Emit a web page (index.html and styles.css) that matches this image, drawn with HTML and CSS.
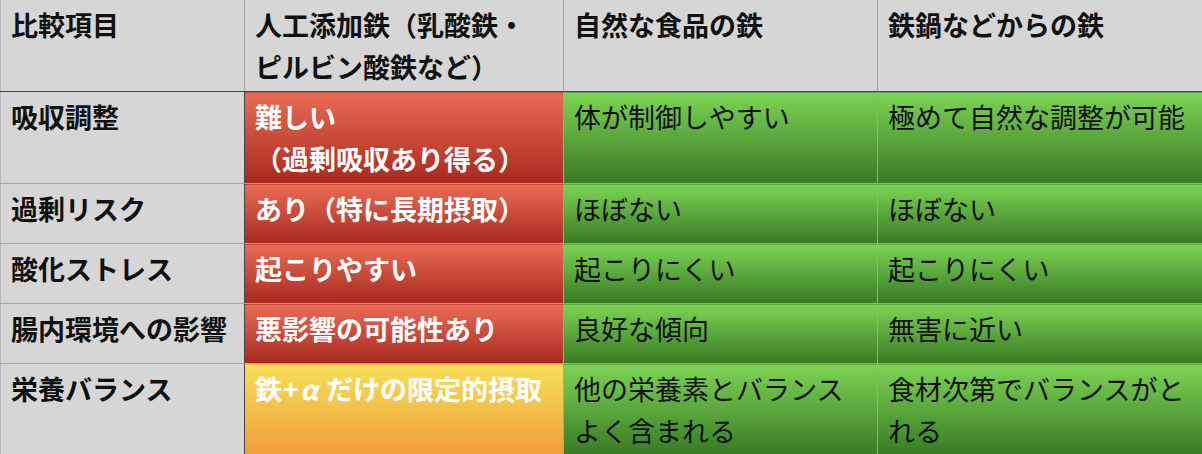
FILE: index.html
```html
<!DOCTYPE html>
<html lang="ja">
<head>
<meta charset="utf-8">
<title>鉄の比較</title>
<link rel="stylesheet" href="styles.css">
</head>
<body>
<table class="cmp">
  <colgroup>
    <col class="c1"><col class="c2"><col class="c3"><col class="c4">
  </colgroup>
  <thead>
    <tr class="head">
      <th>比較項目</th>
      <th>人工添加鉄（乳酸鉄・ピルビン酸鉄など）</th>
      <th>自然な食品の鉄</th>
      <th>鉄鍋などからの鉄</th>
    </tr>
  </thead>
  <tbody>
    <tr>
      <th class="item">吸収調整</th>
      <td class="bad">難しい<br>（過剰吸収あり得る）</td>
      <td class="good">体が制御しやすい</td>
      <td class="good">極めて自然な調整が可能</td>
    </tr>
    <tr class="one">
      <th class="item">過剰リスク</th>
      <td class="bad">あり（特に長期摂取）</td>
      <td class="good">ほぼない</td>
      <td class="good">ほぼない</td>
    </tr>
    <tr class="one">
      <th class="item">酸化ストレス</th>
      <td class="bad">起こりやすい</td>
      <td class="good">起こりにくい</td>
      <td class="good">起こりにくい</td>
    </tr>
    <tr class="one">
      <th class="item">腸内環境への影響</th>
      <td class="bad">悪影響の可能性あり</td>
      <td class="good">良好な傾向</td>
      <td class="good">無害に近い</td>
    </tr>
    <tr>
      <th class="item">栄養バランス</th>
      <td class="warn">鉄<span class="plus">+</span><span class="greek">α</span>だけの限定的摂取</td>
      <td class="good">他の栄養素とバランスよく含まれる</td>
      <td class="good">食材次第でバランスがとれる</td>
    </tr>
  </tbody>
</table>
</body>
</html>
```

FILE: styles.css
```css
html, body {
  margin: 0;
  padding: 0;
  background: #ffffff;
}

.cmp {
  width: 1202px;
  table-layout: fixed;
  border-collapse: collapse;
  font-family: "Noto Sans CJK JP", "Noto Sans", sans-serif;
  font-size: 27px;
  line-height: 42px;
  color: #111111;
}

.c1 { width: 244px; }
.c2 { width: 319px; }
.c3 { width: 314px; }
.c4 { width: 325px; }

.cmp th,
.cmp td {
  text-align: left;
  vertical-align: top;
  padding: 4px 14px 3px 10px;
  border: 1px solid #a3a3a3;
  border-top: none;
}

.cmp tr > :first-child {
  border-left: 1px solid #b8b8b8;
}

.cmp tr > :last-child {
  border-right: none;
}

.head th {
  background: #d6d6d6;
  font-weight: 700;
  border-bottom: 1px solid #454545;
  border-top: none;
}

.item {
  background: #d6d6d6;
  font-weight: 700;
  border-right: 1px solid #454545 !important;
}

.one th,
.one td {
  height: 52px;
}

.bad {
  background: linear-gradient(to bottom, #e96c58, #a8291d);
  color: #ffffff;
  font-weight: 700;
}

.warn {
  background: linear-gradient(to bottom, #f7e05a, #ef9e38);
  color: #ffffff;
  font-weight: 700;
}

.plus {
  padding-left: 1px;
}

.greek {
  display: inline-block;
  width: 26px;
  padding-left: 1px;
  text-align: left;
  font-style: italic;
}

.good {
  background: linear-gradient(to bottom, #7dd455, #377a22);
  color: #111111;
  font-weight: 400;
}
```
